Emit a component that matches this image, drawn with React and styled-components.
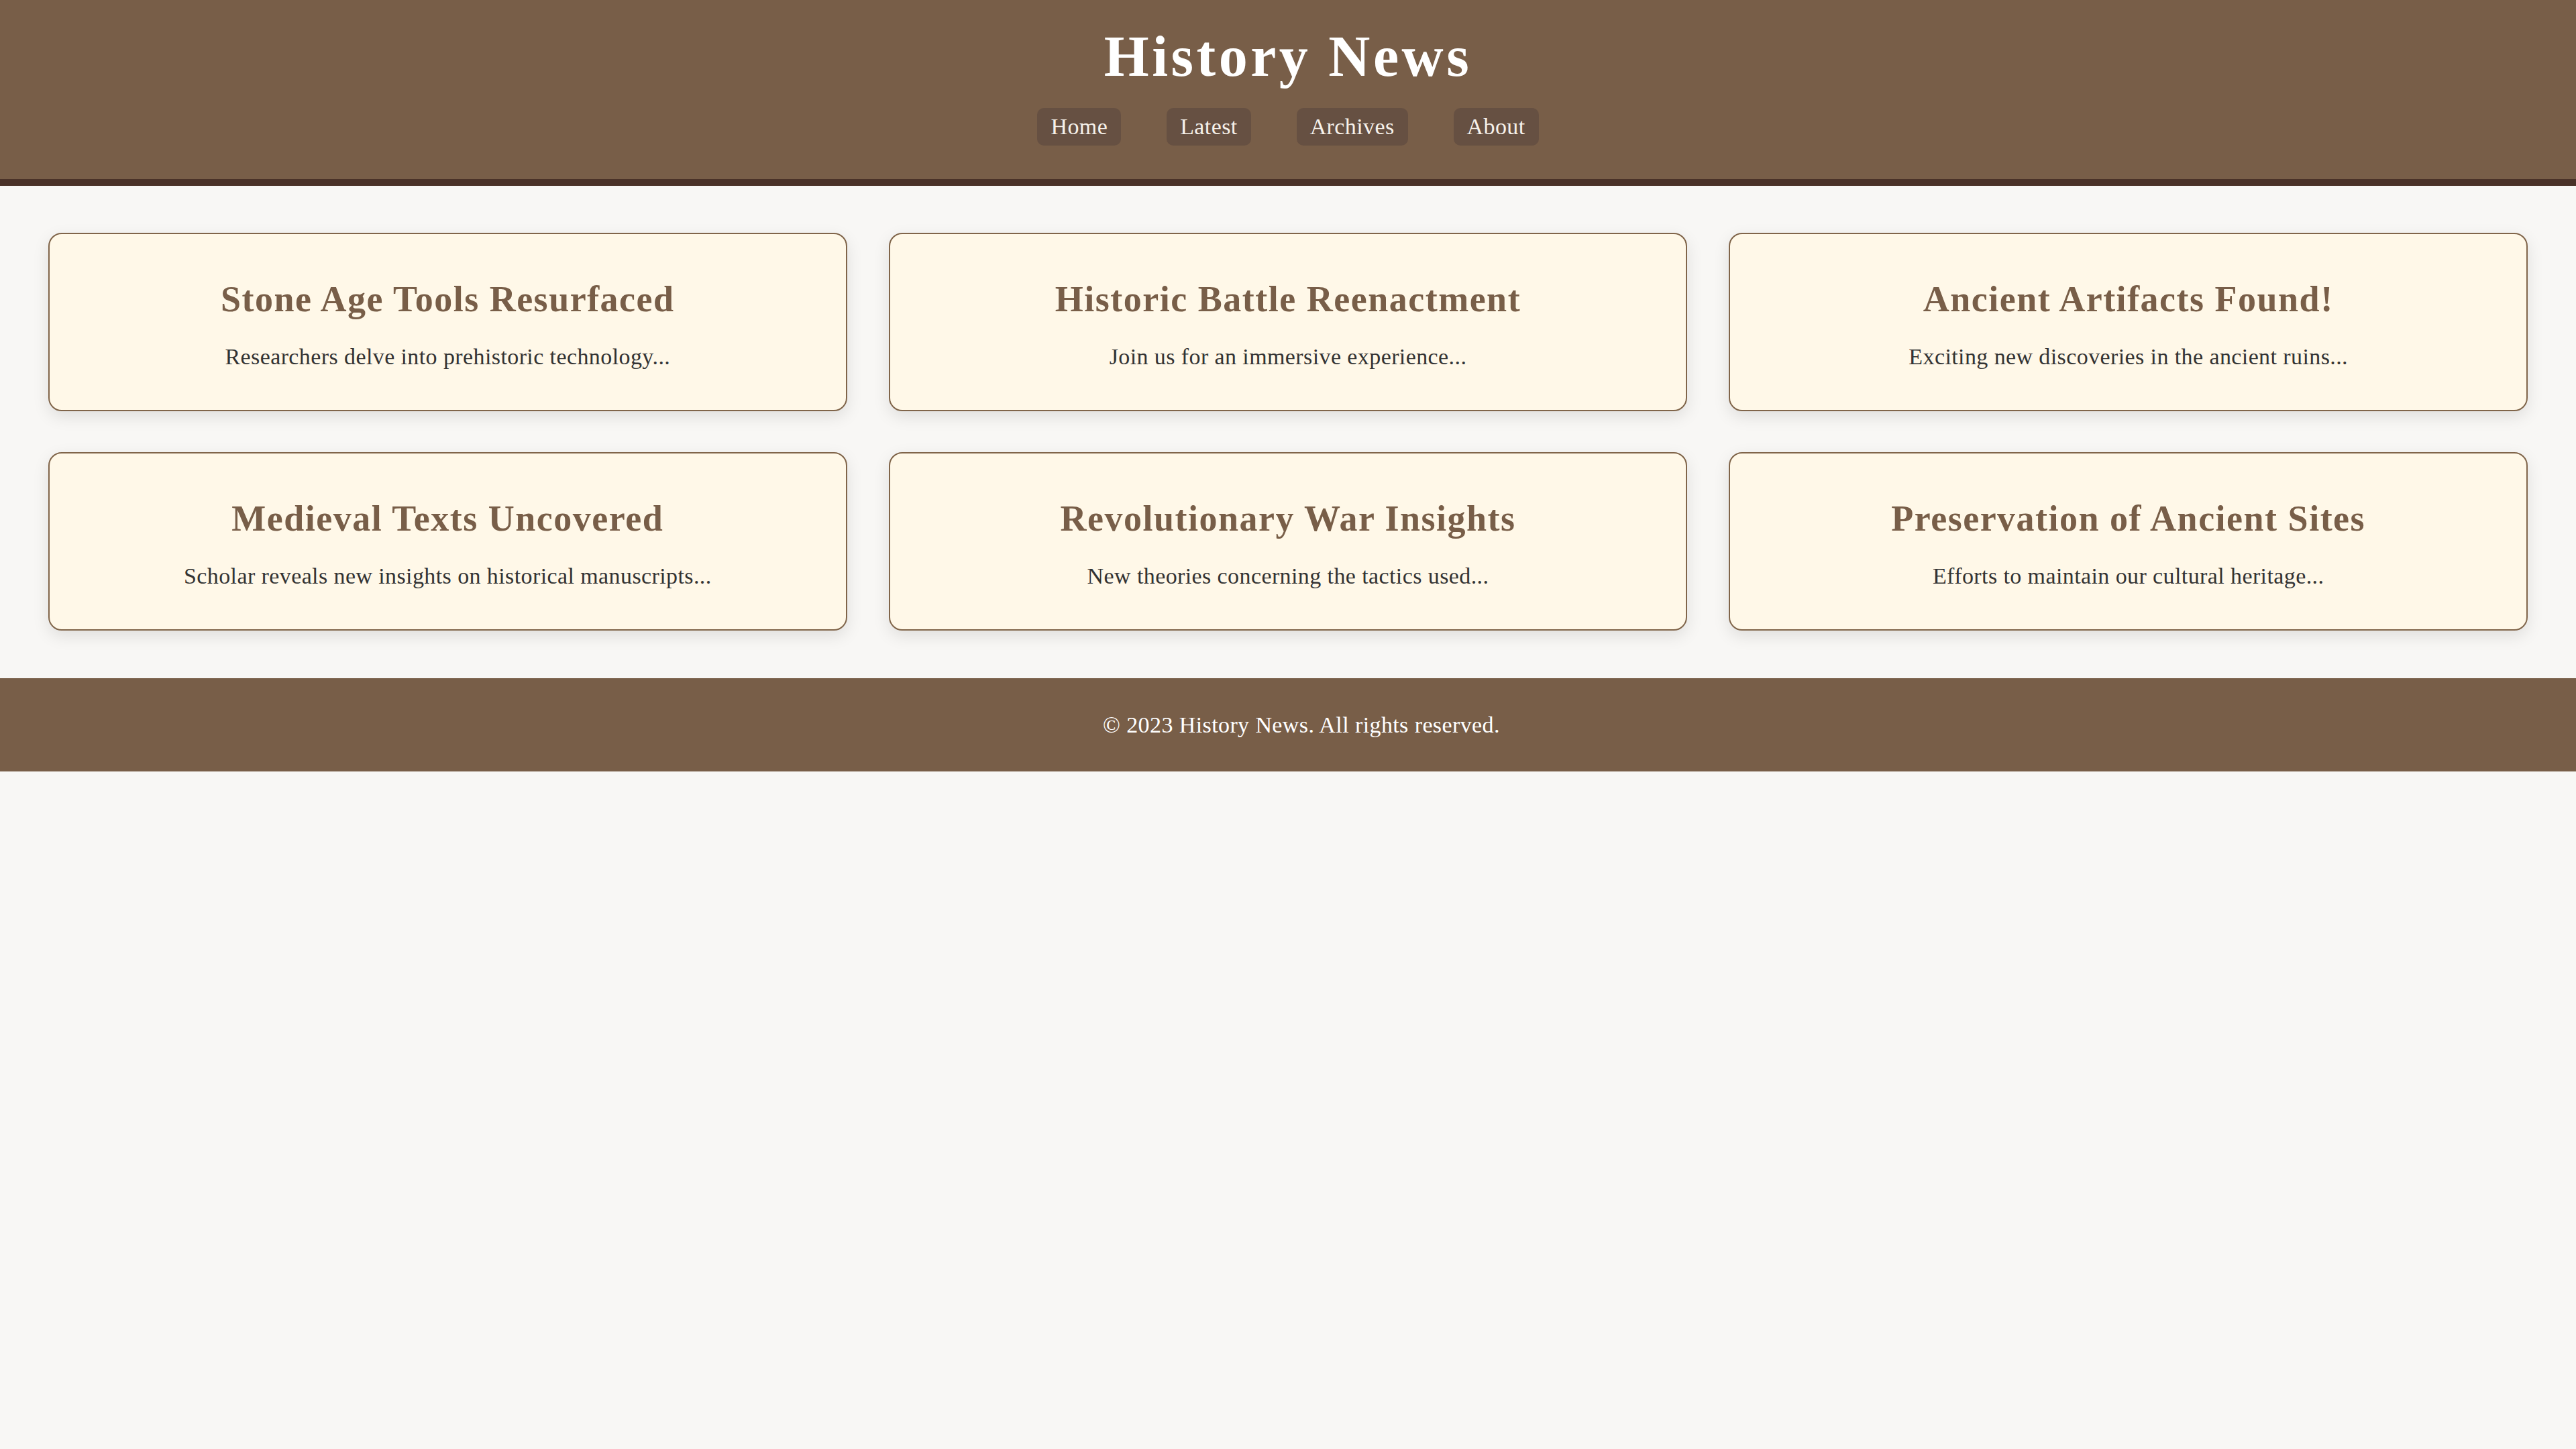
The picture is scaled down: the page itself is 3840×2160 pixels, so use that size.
import React from 'react'
import styled, { createGlobalStyle } from 'styled-components'

const GlobalStyle = createGlobalStyle`
  html, body {
    margin: 0;
    padding: 0;
    background: #f8f7f5;
    font-family: "Liberation Serif", Georgia, serif;
    color: #333333;
  }
`

const Header = styled.header`
  background: #785e48;
  border-bottom: 10px solid #4a3228;
  padding: 34px 0 50px;
  text-align: center;
`
const Title = styled.h1`
  margin: 0;
  font-size: 86px;
  line-height: 100px;
  font-weight: 700;
  letter-spacing: 4.5px;
  color: #ffffff;
`
const Nav = styled.nav`
  margin-top: 27px;
  display: flex;
  justify-content: center;
  gap: 68px;
`
const NavLink = styled.a`
  display: block;
  padding: 10px 20px;
  border-radius: 10px;
  background: #665042;
  color: #f6f1ea;
  font-size: 34px;
  line-height: 36px;
  letter-spacing: 0.4px;
  text-decoration: none;
`
const Main = styled.main`
  padding: 70px 72px 71px;
  display: grid;
  grid-template-columns: repeat(3, 1fr);
  column-gap: 62px;
  row-gap: 61px;
`
const Card = styled.article`
  background: #fff8e8;
  border: 2px solid #80654a;
  border-radius: 20px;
  box-shadow: 0 8px 24px rgba(0, 0, 0, 0.1);
  padding: 66px 40px 59px;
  text-align: center;
`
const CardTitle = styled.h2`
  margin: 0 0 35px;
  font-size: 54px;
  line-height: 62px;
  font-weight: 700;
  letter-spacing: 1.5px;
  color: #785e48;
`
const CardText = styled.p`
  margin: 0;
  font-size: 34px;
  line-height: 40px;
  letter-spacing: 0.4px;
  color: #333333;
`
const Footer = styled.footer`
  background: #785e48;
  color: #ffffff;
  text-align: center;
  padding: 49.5px 0 49.5px 40px;
  font-size: 34px;
  line-height: 40px;
  letter-spacing: 0.4px;
`

const links = ['Home', 'Latest', 'Archives', 'About']

const stories = [
  { title: 'Stone Age Tools Resurfaced', text: 'Researchers delve into prehistoric technology...' },
  { title: 'Historic Battle Reenactment', text: 'Join us for an immersive experience...' },
  { title: 'Ancient Artifacts Found!', text: 'Exciting new discoveries in the ancient ruins...' },
  { title: 'Medieval Texts Uncovered', text: 'Scholar reveals new insights on historical manuscripts...' },
  { title: 'Revolutionary War Insights', text: 'New theories concerning the tactics used...' },
  { title: 'Preservation of Ancient Sites', text: 'Efforts to maintain our cultural heritage...' },
]

export default function App() {
  return (
    <>
      <GlobalStyle />
      <Header>
        <Title>History News</Title>
        <Nav>
          {links.map(l => (
            <NavLink key={l} href="#">{l}</NavLink>
          ))}
        </Nav>
      </Header>
      <Main>
        {stories.map(s => (
          <Card key={s.title}>
            <CardTitle>{s.title}</CardTitle>
            <CardText>{s.text}</CardText>
          </Card>
        ))}
      </Main>
      <Footer>© 2023 History News. All rights reserved.</Footer>
    </>
  )
}
